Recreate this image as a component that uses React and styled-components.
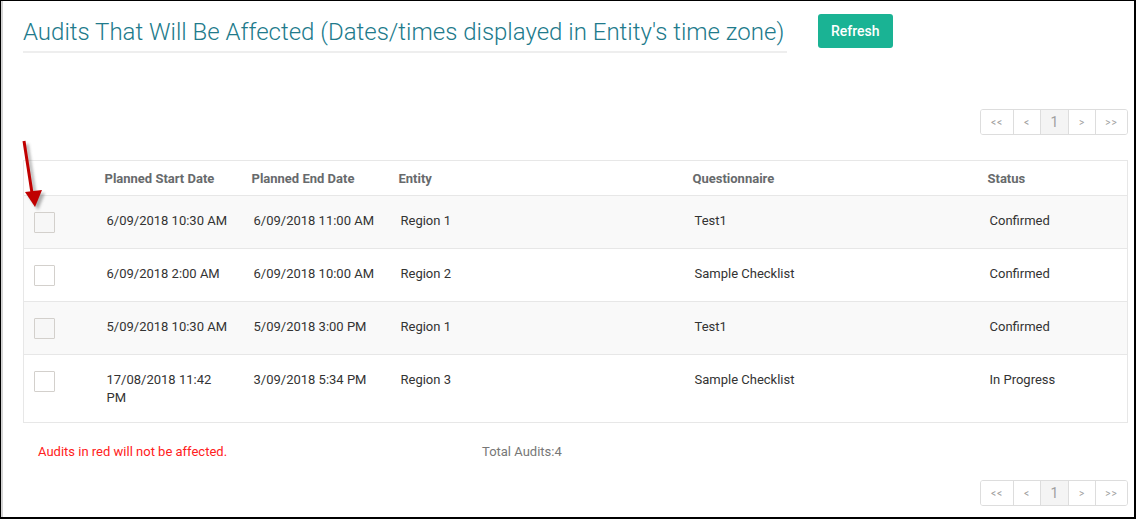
import React from 'react';
import styled, { createGlobalStyle } from 'styled-components';

const GlobalStyle = createGlobalStyle`
  html, body {
    margin: 0;
    padding: 0;
    background: #fff;
  }
  body {
    font-family: Roboto, "Liberation Sans", Arial, sans-serif;
    color: #333;
  }
`;

const Frame = styled.div`
  position: relative;
  box-sizing: border-box;
  width: 1136px;
  height: 519px;
  border-top: 1px solid #000;
  border-left: 1px solid #000;
  border-right: 2px solid #000;
  border-bottom: 2px solid #000;
  box-shadow: inset 2px 0 0 #d4d4d4;
  padding: 0 6px 0 22px;
  overflow: hidden;
`;

const Header = styled.div`
  display: flex;
  align-items: flex-start;
  gap: 31px;
`;

const Title = styled.h2`
  width: 764px;
  margin: 16px 0 0;
  padding-bottom: 4px;
  border-bottom: 2px solid #eeeeee;
  font-size: 24px;
  line-height: 30px;
  font-weight: 300;
  color: #217a8b;
  white-space: nowrap;
`;

const PrimaryButton = styled.button`
  margin-top: 13px;
  height: 34px;
  padding: 0 13px;
  border: none;
  border-radius: 3px;
  background: #1ab394;
  color: #fff;
  font-family: inherit;
  font-size: 14px;
  font-weight: 500;
`;

const PagerRow = styled.div`
  display: flex;
  justify-content: flex-end;
  margin-top: ${({ $top }) => $top}px;
`;

const Pager = styled.div`
  display: flex;
  height: 26px;
  border: 1px solid #dddddd;
  border-radius: 3px;
  box-sizing: border-box;
  overflow: hidden;
`;

const PageCell = styled.span`
  box-sizing: border-box;
  display: flex;
  align-items: center;
  justify-content: center;
  width: ${({ $w }) => $w}px;
  border-left: ${({ $first }) => ($first ? 'none' : '1px solid #dddddd')};
  background: ${({ $active }) => ($active ? '#f4f4f4' : '#fff')};
  color: #a0a0a0;
  font-size: ${({ $active }) => ($active ? '14px' : '10px')};
  letter-spacing: ${({ $active }) => ($active ? '0' : '1px')};
`;

const Table = styled.table`
  width: 1105px;
  margin-top: 25px;
  border: 1px solid #e7e7e7;
  border-collapse: collapse;
  table-layout: fixed;
`;

const HeadCell = styled.th`
  height: 34px;
  padding: 0 8px;
  text-align: left;
  font-size: 13px;
  font-weight: 700;
  color: #676a6c;
  border-bottom: 1px solid #e7e7e7;
`;

const Row = styled.tr`
  background: ${({ $striped }) => ($striped ? '#f9f9f9' : '#fff')};
  border-top: 1px solid #e7e7e7;
`;

const Cell = styled.td`
  padding: 16px 10px 15px 10px;
  vertical-align: top;
  font-size: 13px;
  line-height: 18px;
  color: #333;
`;

const CheckCell = styled.td`
  padding: 16px 0 15px 10px;
  vertical-align: top;
`;

const Checkbox = styled.span`
  display: block;
  width: 19px;
  height: 19px;
  border: 1px solid #d3d0cc;
  border-radius: 1px;
  background: ${({ $striped }) => ($striped ? '#f7f7f7' : '#fff')};
`;

const Footer = styled.div`
  display: grid;
  grid-template-columns: 444px auto;
  margin-top: 21px;
  padding-left: 15px;
  font-size: 13px;
`;

const Warning = styled.span`
  color: #ff2020;
`;

const Total = styled.span`
  color: #777;
`;

const Arrow = styled.svg`
  position: absolute;
  left: 16px;
  top: 136px;
`;

const pages = [
  { label: '<<', w: 32 },
  { label: '<', w: 27 },
  { label: '1', w: 28, active: true },
  { label: '>', w: 27 },
  { label: '>>', w: 32 },
];

const audits = [
  ['6/09/2018 10:30 AM', '6/09/2018 11:00 AM', 'Region 1', 'Test1', 'Confirmed'],
  ['6/09/2018 2:00 AM', '6/09/2018 10:00 AM', 'Region 2', 'Sample Checklist', 'Confirmed'],
  ['5/09/2018 10:30 AM', '5/09/2018 3:00 PM', 'Region 1', 'Test1', 'Confirmed'],
  ['17/08/2018 11:42 PM', '3/09/2018 5:34 PM', 'Region 3', 'Sample Checklist', 'In Progress'],
];

const Pagination = ({ top }) => (
  <PagerRow $top={top}>
    <Pager>
      {pages.map((p, i) => (
        <PageCell key={p.label} $w={p.w} $first={i === 0} $active={p.active}>
          {p.label}
        </PageCell>
      ))}
    </Pager>
  </PagerRow>
);

const App = () => (
  <>
    <GlobalStyle />
    <Frame>
      <Header>
        <Title>Audits That Will Be Affected (Dates/times displayed in Entity's time zone)</Title>
        <PrimaryButton>Refresh</PrimaryButton>
      </Header>

      <Pagination top={56} />

      <Table>
        <colgroup>
          <col style={{ width: 73 }} />
          <col style={{ width: 147 }} />
          <col style={{ width: 147 }} />
          <col style={{ width: 294 }} />
          <col style={{ width: 295 }} />
          <col />
        </colgroup>
        <thead>
          <tr>
            <HeadCell />
            <HeadCell>Planned Start Date</HeadCell>
            <HeadCell>Planned End Date</HeadCell>
            <HeadCell>Entity</HeadCell>
            <HeadCell>Questionnaire</HeadCell>
            <HeadCell>Status</HeadCell>
          </tr>
        </thead>
        <tbody>
          {audits.map((a, i) => (
            <Row key={i} $striped={i % 2 === 0}>
              <CheckCell>
                <Checkbox $striped={i % 2 === 0} />
              </CheckCell>
              {a.map((v, j) => (
                <Cell key={j}>{v}</Cell>
              ))}
            </Row>
          ))}
        </tbody>
      </Table>

      <Footer>
        <Warning>Audits in red will not be affected.</Warning>
        <Total>Total Audits:4</Total>
      </Footer>

      <Pagination top={21} />

      <Arrow width="34" height="80" viewBox="0 0 34 80">
        <defs>
          <filter id="arrowShadow" x="-50%" y="-50%" width="200%" height="200%">
            <feGaussianBlur stdDeviation="1.5" />
          </filter>
        </defs>
        <g transform="translate(3 3)" fill="#7a7a7a" stroke="#7a7a7a" opacity="0.6" filter="url(#arrowShadow)">
          <line x1="7" y1="4" x2="15" y2="56" strokeWidth="3" />
          <polygon points="8,55 25,53 18,70" stroke="none" />
        </g>
        <g fill="#c00000" stroke="#c00000">
          <line x1="7" y1="4" x2="15" y2="56" strokeWidth="3" />
          <polygon points="8,55 25,53 18,70" stroke="none" />
        </g>
      </Arrow>
    </Frame>
  </>
);

export default App;
